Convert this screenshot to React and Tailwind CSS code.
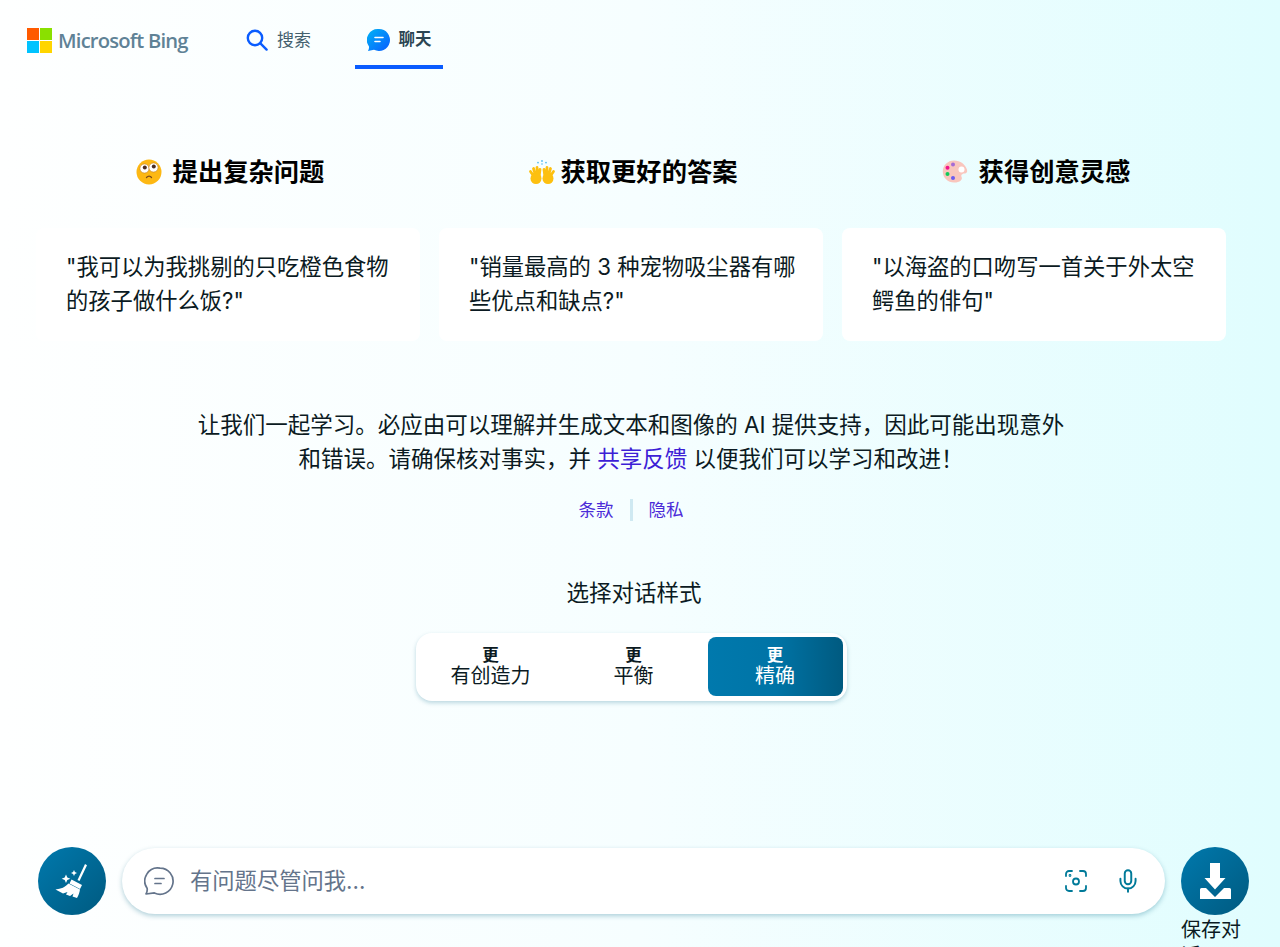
import { Mic } from 'lucide-react';

const cjk = "font-['Inter','Noto_Sans_CJK_SC',sans-serif]";

function BingLogo() {
  return (
    <div className="flex w-[162px] items-center">
      <div className="grid grid-cols-2 gap-px w-[25px] h-[25px] shrink-0">
        <div className="bg-[#ff5a00]" />
        <div className="bg-[#8ae000]" />
        <div className="bg-[#00c3ff]" />
        <div className="bg-[#ffd500]" />
      </div>
      <span className="ml-[6px] whitespace-nowrap text-[20.2px] font-semibold tracking-[-0.8px] leading-none text-[#5f8296] font-['Open_Sans',sans-serif]">
        Microsoft Bing
      </span>
    </div>
  );
}

function SearchIcon() {
  return (
    <svg width="22" height="22" viewBox="0 0 22 22" fill="none" stroke="#0a5cff" strokeWidth="2.4" strokeLinecap="round">
      <circle cx="9" cy="9" r="7.2" />
      <path d="M14.4 14.4 20.6 20.6" />
    </svg>
  );
}

function ChatBubble() {
  return (
    <svg width="23" height="24" viewBox="0 0 23 24">
      <defs>
        <linearGradient id="bubble" x1="0" y1="0" x2="1" y2="1">
          <stop offset="0" stopColor="#00b4f5" />
          <stop offset="1" stopColor="#0a5cff" />
        </linearGradient>
      </defs>
      <path d="M12 1a11 11 0 1 1-5 20.8L1 23c.9-1.5 1.2-3 1-4.6A11 11 0 0 1 12 1z" fill="url(#bubble)" />
      <path d="M8 9.5h8M8 13.5h5" stroke="#fff" strokeWidth="1.6" strokeLinecap="round" />
    </svg>
  );
}

function FaceEmoji() {
  return (
    <svg width="26" height="26" viewBox="0 0 26 26">
      <circle cx="13" cy="13" r="12.5" fill="#fdb813" />
      <circle cx="8.5" cy="9.5" r="4.6" fill="#fff" stroke="#c98a2a" strokeWidth="0.7" />
      <circle cx="17.5" cy="8.5" r="4.6" fill="#fff" stroke="#c98a2a" strokeWidth="0.7" />
      <circle cx="8.8" cy="8.4" r="2" fill="#4b2c20" />
      <circle cx="17.8" cy="7.4" r="2" fill="#4b2c20" />
      <path d="M10.5 18.5c1.6-1.8 3.6-1.8 5 0" fill="none" stroke="#7a4a1c" strokeWidth="1.3" strokeLinecap="round" />
    </svg>
  );
}

function HandsEmoji() {
  return (
    <svg width="28" height="26" viewBox="0 0 28 26">
      <g fill="#fdc010" stroke="#fdc010" strokeWidth="2.8" strokeLinecap="round">
        <path d="M7 19 2.500 12.500M8 18 5.500 9.500M9.500 18 9 8.500M11 18 12 10.500" />
        <path d="M21 19 25.500 12.500M20 18 22.500 9.500M18.500 18 19 8.500M17 18 16 10.500" />
      </g>
      <ellipse cx="8" cy="19.500" rx="5.500" ry="5.500" fill="#fdc010" />
      <ellipse cx="20" cy="19.500" rx="5.500" ry="5.500" fill="#fdc010" />
      <circle cx="10" cy="3.600" r="0.900" fill="#55bdf0" />
      <circle cx="14" cy="2" r="0.900" fill="#55bdf0" />
      <circle cx="18" cy="3.600" r="0.900" fill="#55bdf0" />
      <circle cx="14" cy="5" r="0.800" fill="#55bdf0" />
    </svg>
  );
}

function PaletteEmoji() {
  return (
    <svg width="26" height="26" viewBox="0 0 26 26">
      <path d="M12 1.500C5.600 1.500.8 6.400.8 12.600c0 6.300 5 11 11.400 11 6 0 8.600-3.200 7.400-5.600-1-2 .6-3.200 3-3.400 2.200-.2 3-1.800 2.400-3.800C23.300 5.200 18.400 1.500 12 1.500z" fill="#f9c6bd" />
      <circle cx="19.500" cy="10.500" r="3" fill="#fff" />
      <circle cx="11" cy="5.500" r="2" fill="#a56bd6" />
      <circle cx="5.500" cy="8.800" r="2" fill="#f0148c" />
      <circle cx="5.500" cy="15" r="2" fill="#12c95a" />
      <circle cx="11" cy="19" r="2" fill="#6a5cf0" />
    </svg>
  );
}

function BroomIcon() {
  return (
    <svg width="45" height="50" viewBox="0 0 45 50" fill="#fff">
      <path d="M35 8 37 9.200 29.500 25 27.500 24z" />
      <path d="M21.500 23.500 32 29 30 33 19.500 27.500z" />
      <path d="M18.500 27.500 30 33.500C29.500 36.500 28.500 39.500 27 42L22.500 40.500 23.500 37.500 20 40 16 38.500 17.500 36 13 37.500 5.500 33.500C11 33 15.500 31 18.500 27.500z" />
      <path d="M16 18.500l1.300 3 3 1.300-3 1.300-1.300 3-1.300-3-3-1.300 3-1.300z" />
      <path d="M24 14l.9 2.100 2.100.9-2.100.9-.9 2.100-.9-2.100-2.100-.9 2.100-.9z" />
    </svg>
  );
}

function DownloadIcon() {
  return (
    <svg width="50" height="50" viewBox="0 0 50 50" fill="#fff">
      <path d="M20 7h10v15h5.500L25 33.500 14.500 22H20z" />
      <path d="M10 43V33.500A1.500 1.500 0 0 1 11.500 32H16L25 41 34 32h5.500A1.500 1.500 0 0 1 41 33.500V43z" />
    </svg>
  );
}

function ChatOutline() {
  return (
    <svg width="30" height="30" viewBox="0 0 30 30" fill="none" stroke="#64748b" strokeWidth="1.7" strokeLinecap="round" strokeLinejoin="round">
      <path d="M16 2.200a13 13 0 1 1-5.600 24.700L2 28c1-1.900 1.400-3.700 1.200-5.500A13 13 0 0 1 16 2.200z" />
      <path d="M11 12.500h9M11 17.500h6" />
    </svg>
  );
}

function ScanIcon() {
  return (
    <svg width="24" height="24" viewBox="0 0 24 24" fill="none" stroke="#007a99" strokeWidth="1.8" strokeLinecap="round">
      <path d="M2 7V5a3 3 0 0 1 3-3h3M16 2h3a3 3 0 0 1 3 3v2M22 17v2a3 3 0 0 1-3 3h-3M8 22H5a3 3 0 0 1-3-3v-2" />
      <circle cx="12" cy="12.500" r="3" />
      <circle cx="6" cy="6.500" r="0.500" />
    </svg>
  );
}

const columns = [
  { icon: <FaceEmoji />, gap: 'gap-[11px]', title: '提出复杂问题', quote: '"我可以为我挑剔的只吃橙色食物的孩子做什么饭?"' },
  { icon: <HandsEmoji />, gap: 'gap-[4px]', title: '获取更好的答案', quote: '"销量最高的 3 种宠物吸尘器有哪些优点和缺点?"' },
  { icon: <PaletteEmoji />, gap: 'gap-[11px]', title: '获得创意灵感', quote: '"以海盗的口吻写一首关于外太空鳄鱼的俳句"' },
];

export default function App() {
  return (
    <div className={`h-[947px] overflow-hidden bg-gradient-to-r from-[#feffff] via-[#f6feff] to-[#e0fdfe] text-[#0b1a22] ${cjk}`}>
      <header className="flex h-[69px] items-start pl-[27px]">
        <div className="pt-[28px]">
          <BingLogo />
        </div>
        <div className="ml-[57px] flex items-center gap-[9px] pt-[29px]">
          <SearchIcon />
          <span className="text-[17px] leading-[20px] text-[#44606e]">搜索</span>
        </div>
        <div className="ml-[44px] flex h-[69px] w-[88px] justify-center gap-[9px] border-b-4 border-[#0a5cff] pt-[28px]">
          <ChatBubble />
          <span className="text-[16.5px] font-bold leading-[22px] text-[#2b4552]">聊天</span>
        </div>
      </header>

      <main className="ml-[36px] w-[1190px]">
        <div className="mt-[86px] grid grid-cols-3 gap-[19px]">
          {columns.map((col) => (
            <div key={col.title}>
              <h2 className={`flex h-[34px] items-center justify-center pl-[4px] ${col.gap} text-[25.3px] font-bold leading-[34px] text-black`}>
                {col.icon}
                <span>{col.title}</span>
              </h2>
              <div className="mt-[39px] h-[113px] rounded-[8px] bg-white pl-[30px] pr-[20px] pt-[22px] text-[22.3px] leading-[34px]">
                {col.quote}
              </div>
            </div>
          ))}
        </div>

        <p className="mx-auto mt-[67px] w-[880px] text-center text-[22.5px] leading-[34px]">
          让我们一起学习。必应由可以理解并生成文本和图像的 AI 提供支持，因此可能出现意外和错误。请确保核对事实，并 <a className="text-[#3d1fd6]">共享反馈</a> 以便我们可以学习和改进！
        </p>

        <div className="mt-[22px] flex items-center justify-center text-[17.5px] leading-[24px] text-[#4b2bd8]">
          <a>条款</a>
          <div className="mx-[16px] h-[22px] w-[3px] bg-[#cfe9f2]" />
          <a>隐私</a>
        </div>

        <div className="mt-[54px] pl-[6px] text-center text-[22.5px] leading-[34px]">选择对话样式</div>

        <div className="mx-auto mt-[23px] flex h-[68px] w-[431px] rounded-[16px] bg-white p-[4px] shadow-[0_2px_4px_rgba(0,100,130,0.25)]">
          <button className="flex w-[142px] flex-col items-center justify-center">
            <span className="text-[16.5px] font-bold leading-[19px]">更</span>
            <span className="text-[20px] leading-[23px]">有创造力</span>
          </button>
          <button className="flex w-[144px] flex-col items-center justify-center">
            <span className="text-[16.5px] font-bold leading-[19px]">更</span>
            <span className="text-[20px] leading-[23px]">平衡</span>
          </button>
          <button className="ml-auto flex h-[59px] w-[135px] flex-col items-center justify-center rounded-[8px] bg-gradient-to-r from-[#0079ad] via-[#0074a6] to-[#005a80] text-white">
            <span className="text-[16.5px] font-bold leading-[19px]">更</span>
            <span className="text-[20px] leading-[23px]">精确</span>
          </button>
        </div>
      </main>

      <div className="mt-[146px] flex items-start pl-[38px]">
        <button className="flex h-[68px] w-[68px] shrink-0 items-center justify-center rounded-full bg-gradient-to-br from-[#0079ad] to-[#005a80]">
          <BroomIcon />
        </button>
        <div className="ml-[16px] mt-px flex h-[66px] w-[1043px] items-center rounded-[33px] bg-white pl-[22px] pr-[24px] shadow-[0_2px_5px_rgba(0,100,130,0.3)]">
          <ChatOutline />
          <span className="ml-[16px] flex-1 text-[22.3px] text-[#64748b]">有问题尽管问我...</span>
          <ScanIcon />
          <Mic size={26} strokeWidth={1.8} className="ml-[27px] text-[#007a99]" />
        </div>
        <div className="ml-[16px] w-[68px]">
          <button className="flex h-[68px] w-[68px] items-center justify-center rounded-full bg-gradient-to-br from-[#0079ad] to-[#005a80]">
            <DownloadIcon />
          </button>
          <div className="mt-[2px] w-[60px] text-[20px] leading-[26px]">保存对话</div>
        </div>
      </div>
    </div>
  );
}
